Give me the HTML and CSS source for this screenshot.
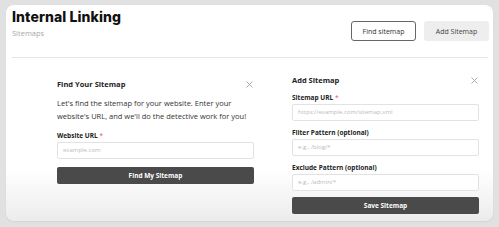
FILE: index.html
```html
<!DOCTYPE html>
<html>
<head>
<meta charset="utf-8">
<link rel="stylesheet" href="styles.css">
</head>
<body>
<div class="card">
  <header class="header">
    <div class="heading">
      <h1 class="title">Internal Linking</h1>
      <div class="subtitle">Sitemaps</div>
    </div>
    <div class="actions">
      <button class="btn btn-outline">Find sitemap</button>
      <button class="btn btn-soft">Add Sitemap</button>
    </div>
  </header>
  <div class="divider"></div>
  <div class="panels">
    <section class="panel panel-find">
      <div class="panel-head">
        <h2 class="panel-title">Find Your Sitemap</h2>
        <svg class="close" width="7" height="7" viewBox="0 0 7 7"><path d="M0.5 0.5L6.5 6.5M6.5 0.5L0.5 6.5" stroke="#9a9a9a" stroke-width="0.8" fill="none"/></svg>
      </div>
      <p class="desc">Let's find the sitemap for your website. Enter your website's URL, and we'll do the detective work for you!</p>
      <label class="label">Website URL <span class="req">*</span></label>
      <div class="input">example.com</div>
      <button class="btn-dark">Find My Sitemap</button>
    </section>
    <section class="panel panel-add">
      <div class="panel-head">
        <h2 class="panel-title">Add Sitemap</h2>
        <svg class="close" width="7" height="7" viewBox="0 0 7 7"><path d="M0.5 0.5L6.5 6.5M6.5 0.5L0.5 6.5" stroke="#9a9a9a" stroke-width="0.8" fill="none"/></svg>
      </div>
      <label class="label">Sitemap URL <span class="req">*</span></label>
      <div class="input">https://example.com/sitemap.xml</div>
      <label class="label">Filter Pattern (optional)</label>
      <div class="input">e.g., /blog/*</div>
      <label class="label">Exclude Pattern (optional)</label>
      <div class="input">e.g., /admin/*</div>
      <button class="btn-dark">Save Sitemap</button>
    </section>
  </div>
</div>
</body>
</html>
```
FILE: styles.css
```css
* { box-sizing: border-box; }
html, body { margin: 0; padding: 0; }
body {
  background: #e1e1e1;
  width: 499px;
  height: 227px;
  overflow: hidden;
  font-family: "Open Sans", "Noto Sans", sans-serif;
  color: #222;
}
.card {
  margin: 5px 0 0 6px;
  width: 487px;
  height: 216px;
  border-radius: 8px;
  background: linear-gradient(to bottom, #ffffff 0%, #ffffff 76%, #ececec 100%);
  box-shadow: 0 1px 2px rgba(0, 0, 0, 0.06);
  padding: 0 4px 0 6px;
}
.header {
  display: flex;
  justify-content: space-between;
  align-items: flex-start;
  height: 52px;
}
.title {
  margin: 0;
  padding-top: 3px;
  font-family: Inter, sans-serif;
  font-weight: 800;
  font-size: 14px;
  line-height: 17px;
  letter-spacing: 0.1px;
  color: #111;
}
.subtitle {
  margin-top: 3px;
  font-size: 7.5px;
  line-height: 10px;
  color: #a8a8a8;
}
.actions {
  display: flex;
  gap: 8px;
  margin-top: 16px;
}
.btn {
  height: 20px;
  width: 65px;
  padding: 0;
  font-family: "Open Sans", sans-serif;
  font-size: 7px;
  color: #333;
  border-radius: 3px;
}
.btn-outline {
  background: #fff;
  border: 1px solid #666;
}
.btn-soft {
  background: #eeeeee;
  border: none;
  color: #444;
}
.divider {
  height: 1px;
  background: #e6e6e6;
  margin-right: 1px;
}
.panels {
  display: flex;
  padding-left: 45px;
  gap: 38px;
}
.panel {
  display: flex;
  flex-direction: column;
}
.panel-find { width: 197px; padding-top: 20px; }
.panel-add { width: 187px; padding-top: 16px; }
.panel-head {
  display: flex;
  justify-content: space-between;
  align-items: center;
  height: 12px;
}
.panel-title {
  margin: 0;
  font-size: 7.5px;
  font-weight: 700;
  color: #222;
}
.close {
  display: block;
  margin-right: 1px;
}
.desc {
  margin: 7px 0 0;
  font-size: 7.5px;
  line-height: 13px;
  color: #333;
}
.label {
  display: block;
  font-size: 6.5px;
  font-weight: 700;
  line-height: 10px;
  color: #222;
  margin-top: 7px;
}
.panel-find .label { margin-top: 8px; }
.req { color: #e05555; font-weight: 400; }
.input {
  margin-top: 1px;
  height: 17px;
  border: 1px solid #e2e2e2;
  border-radius: 2px;
  background: #fff;
  padding-left: 5px;
  font-size: 6px;
  line-height: 15px;
  color: #bbb;
}
.btn-dark {
  margin-top: 8px;
  height: 17px;
  width: 100%;
  border: none;
  border-radius: 2px;
  background: #4a4a4a;
  color: #fff;
  font-family: "Open Sans", sans-serif;
  font-size: 6.5px;
  font-weight: 700;
  padding: 0;
}
.panel-add .btn-dark { margin-top: 6px; }
```
